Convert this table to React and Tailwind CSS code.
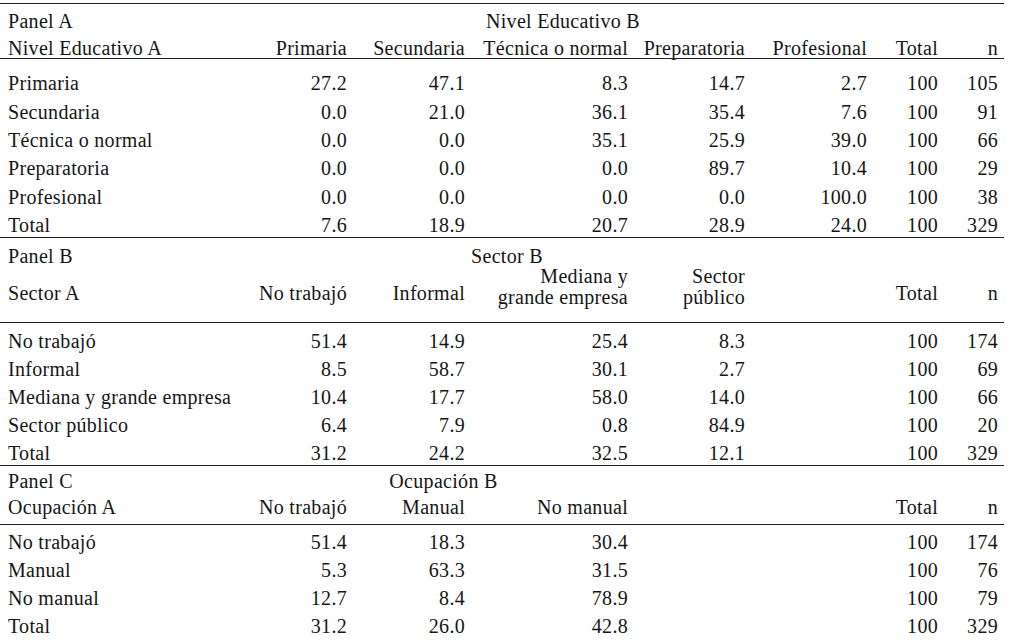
import React from "react";

// column grid shared by the three panels (label + 7 numeric columns)
const grid = "grid grid-cols-[253px_100px_118px_163px_117px_122px_71px_60px]";

const Cells = ({ cells }) =>
	cells.map((c, i) =>
		i === 0 ? (
			<div key={i} className="pl-[8px] whitespace-nowrap">{c}</div>
		) : (
			<div key={i} className="pr-[6px] text-right whitespace-nowrap">{c}</div>
		)
	);

const DataRow = ({ cells, h = "h-[28px]" }) => (
	<div className={`${grid} ${h} pt-[5.6px] leading-[22px]`}>
		<Cells cells={cells} />
	</div>
);

const panelA = [
	["Primaria", "27.2", "47.1", "8.3", "14.7", "2.7", "100", "105"],
	["Secundaria", "0.0", "21.0", "36.1", "35.4", "7.6", "100", "91"],
	["Técnica o normal", "0.0", "0.0", "35.1", "25.9", "39.0", "100", "66"],
	["Preparatoria", "0.0", "0.0", "0.0", "89.7", "10.4", "100", "29"],
	["Profesional", "0.0", "0.0", "0.0", "0.0", "100.0", "100", "38"],
	["Total", "7.6", "18.9", "20.7", "28.9", "24.0", "100", "329"],
];

const panelB = [
	["No trabajó", "51.4", "14.9", "25.4", "8.3", "", "100", "174"],
	["Informal", "8.5", "58.7", "30.1", "2.7", "", "100", "69"],
	["Mediana y grande empresa", "10.4", "17.7", "58.0", "14.0", "", "100", "66"],
	["Sector público", "6.4", "7.9", "0.8", "84.9", "", "100", "20"],
	["Total", "31.2", "24.2", "32.5", "12.1", "", "100", "329"],
];

const panelC = [
	["No trabajó", "51.4", "18.3", "30.4", "", "", "100", "174"],
	["Manual", "5.3", "63.3", "31.5", "", "", "100", "76"],
	["No manual", "12.7", "8.4", "78.9", "", "", "100", "79"],
	["Total", "31.2", "26.0", "42.8", "", "", "100", "329"],
];

const Rule = () => <div className="w-[1004px] h-px bg-[#222]" />;

export default function App() {
	return (
		<div className="w-[1011px] h-[644px] bg-white text-[#161616] text-[20px] tracking-[0.3px] font-['Liberation_Serif',_'Times_New_Roman',_serif] overflow-hidden">
			<div className="pt-[3px]">
				<Rule />

				{/* Panel A */}
				<div className={`${grid} h-[27px] pt-[6px] leading-[22px]`}>
					<div className="pl-[8px]">Panel A</div>
					<div className="col-span-5 text-center">Nivel Educativo B</div>
				</div>
				<div className={`${grid} h-[27px] pt-[6px] leading-[22px]`}>
					<Cells cells={["Nivel Educativo A", "Primaria", "Secundaria", "Técnica o normal", "Preparatoria", "Profesional", "Total", "n"]} />
				</div>
				<Rule />
				<div className="pt-[7.6px]">
					{panelA.map((r) => (
						<DataRow key={r[0]} cells={r} h="h-[28.4px]" />
					))}
				</div>
				<Rule />

				{/* Panel B */}
				<div className={`${grid} h-[27px] pt-[7px] leading-[22px]`}>
					<div className="pl-[8px]">Panel B</div>
					<div className="col-span-4 text-center pl-[10px]">Sector B</div>
				</div>
				<div className={`${grid} h-[57px]`}>
					<div className="pl-[8px] pt-[17px] leading-[22px]">Sector A</div>
					<div className="pr-[6px] pt-[17px] leading-[22px] text-right">No trabajó</div>
					<div className="pr-[6px] pt-[17px] leading-[22px] text-right">Informal</div>
					<div className="pr-[6px] pt-[1px] leading-[21px] text-right">
						Mediana y
						<br />
						grande empresa
					</div>
					<div className="pr-[6px] pt-[1px] leading-[21px] text-right">
						Sector
						<br />
						público
					</div>
					<div />
					<div className="pr-[6px] pt-[17px] leading-[22px] text-right">Total</div>
					<div className="pr-[6px] pt-[17px] leading-[22px] text-right">n</div>
				</div>
				<Rule />
				<div className="pt-[1.6px]">
					{panelB.map((r) => (
						<DataRow key={r[0]} cells={r} />
					))}
				</div>
				<Rule />

				{/* Panel C */}
				<div className={`${grid} h-[26px] pt-[4px] leading-[22px]`}>
					<div className="pl-[8px]">Panel C</div>
					<div className="col-span-3 text-center">Ocupación B</div>
				</div>
				<div className={`${grid} h-[32px] pt-[4px] leading-[22px]`}>
					<Cells cells={["Ocupación A", "No trabajó", "Manual", "No manual", "", "", "Total", "n"]} />
				</div>
				<Rule />
				<div className="pt-[1px] pb-[6px]">
					{panelC.map((r) => (
						<DataRow key={r[0]} cells={r} />
					))}
				</div>
				<Rule />
			</div>
		</div>
	);
}
